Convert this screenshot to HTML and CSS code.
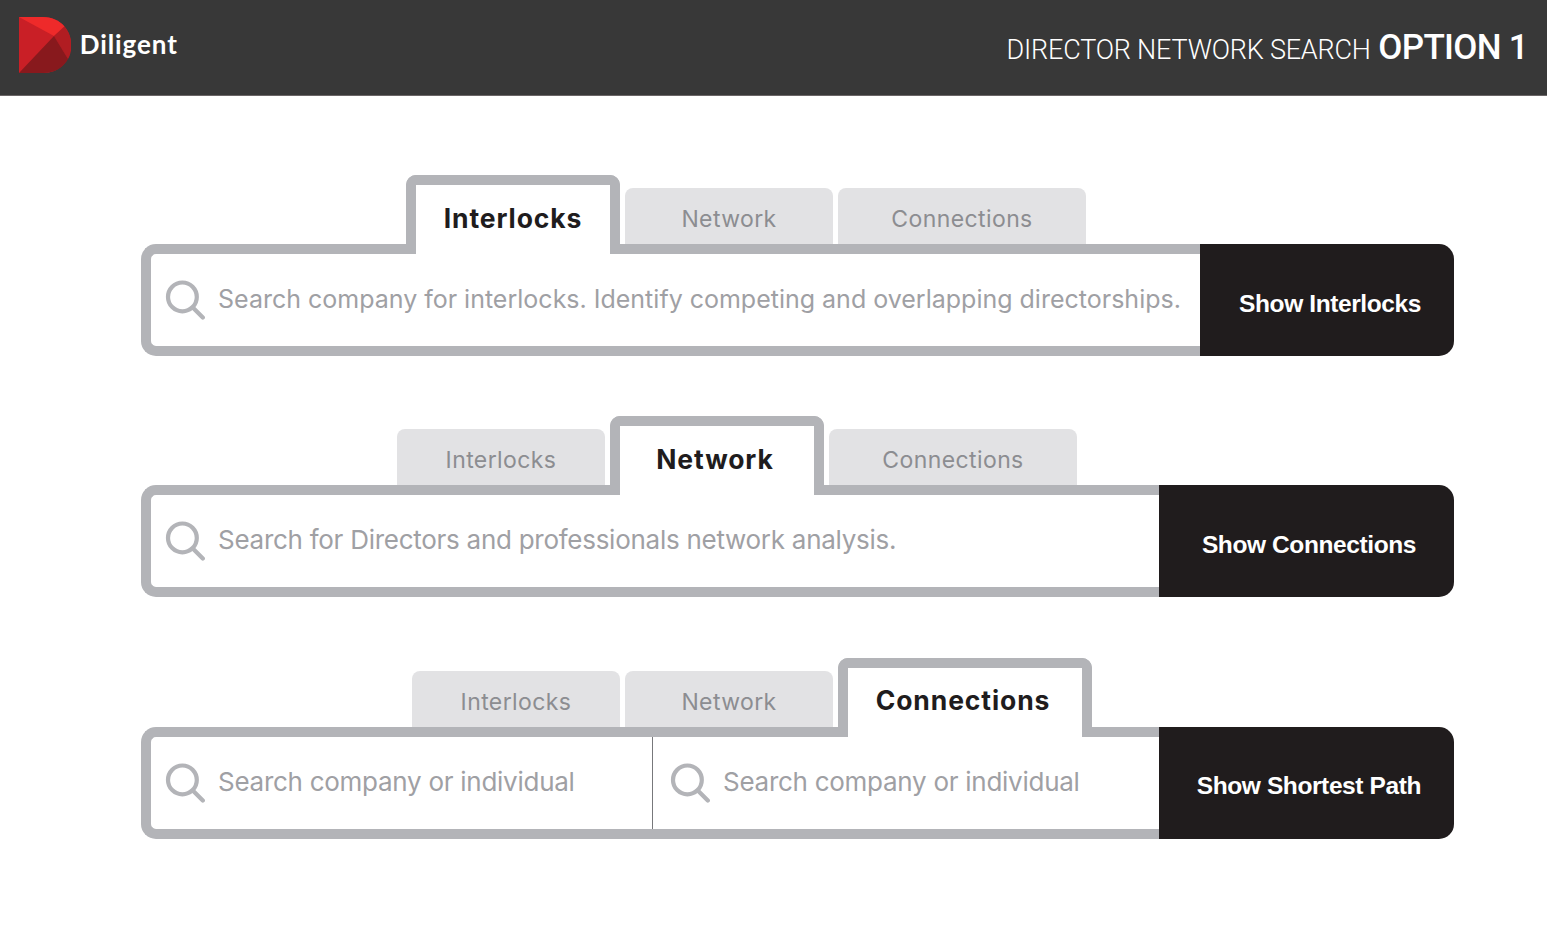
FILE: index.html
```html
<!DOCTYPE html>
<html>
<head>
<meta charset="utf-8">
<title>Diligent - Director Network Search</title>
<link rel="stylesheet" href="styles.css">
</head>
<body>

<svg width="0" height="0" class="defs">
	<symbol id="glass" viewBox="0 0 40 42">
		<circle cx="17.400" cy="17.900" r="14.400" fill="none" stroke="#b3b4b8" stroke-width="4.200"/>
		<path d="M27.800 28.500L37.800 38.600" fill="none" stroke="#b3b4b8" stroke-width="4.200" stroke-linecap="round"/>
	</symbol>
</svg>

<div class="header">
	<a href="#" class="logo">
		<svg width="52" height="56" viewBox="0 0 52 56">
			<path d="M0 0H24C40 0 52 12 52 28S40 56 24 56H0Z" fill="#c91f26"/>
			<path d="M0 0H24C33 0 41 4 45.500 9.500L35 19Z" fill="#ee2a2a"/>
			<path d="M45.500 9.500C54 19 54 33 49 42L35 19Z" fill="#b11d22"/>
			<path d="M0 56L35 19L49 42C44 51 35 56 24 56Z" fill="#88191d"/>
		</svg>
		<span class="brand">Diligent</span>
	</a>
	<h1><span class="light">DIRECTOR NETWORK SEARCH</span> <span class="option">OPTION 1</span></h1>
</div>

<div class="content">

	<div class="search interlocks">
		<ul class="tabs">
			<li class="active"><span>Interlocks</span></li>
			<li><span>Network</span></li>
			<li class="wide"><span>Connections</span></li>
		</ul>
		<div class="bar">
			<div class="field">
				<svg class="glass"><use href="#glass"/></svg>
				<span class="hint">Search company for interlocks. Identify competing and overlapping directorships.</span>
			</div>
			<div class="btn"><span>Show Interlocks</span></div>
		</div>
	</div>

	<div class="search network">
		<ul class="tabs">
			<li><span>Interlocks</span></li>
			<li class="active"><span>Network</span></li>
			<li class="wide"><span>Connections</span></li>
		</ul>
		<div class="bar">
			<div class="field">
				<svg class="glass"><use href="#glass"/></svg>
				<span class="hint">Search for Directors and professionals network analysis.</span>
			</div>
			<div class="btn"><span>Show Connections</span></div>
		</div>
	</div>

	<div class="search connections">
		<ul class="tabs">
			<li><span>Interlocks</span></li>
			<li><span>Network</span></li>
			<li class="active wide"><span>Connections</span></li>
		</ul>
		<div class="bar">
			<div class="field">
				<div class="half">
					<svg class="glass"><use href="#glass"/></svg>
					<span class="hint">Search company or individual</span>
				</div>
				<div class="half">
					<svg class="glass"><use href="#glass"/></svg>
					<span class="hint">Search company or individual</span>
				</div>
			</div>
			<div class="btn"><span>Show Shortest Path</span></div>
		</div>
	</div>

</div>

</body>
</html>
```
FILE: styles.css
```css
* {
	box-sizing: border-box;
}

body {
	margin: 0;
	background-color: #fff;
	font-family: Inter, "Liberation Sans", sans-serif;
	color: #201c1d;
}

.defs {
	position: absolute;
}

/* Header */

.header {
	display: flex;
	justify-content: space-between;
	height: 96px;
	padding: 16.500px 19px 0 19.300px;
	background-color: #383838;
	border-bottom: 1px solid #6a6566;
	color: #fff;
}

.logo {
	display: flex;
	color: #fff;
	text-decoration: none;
}

.brand {
	margin: 11px 0 0 8.500px;
	font-family: Lato, sans-serif;
	font-size: 26px;
	line-height: 32px;
	font-weight: bold;
	letter-spacing: 0.9px;
}

h1 {
	margin: 10.500px 0 0;
	font-family: Roboto, sans-serif;
	font-size: 27px;
	line-height: 42px;
	font-weight: 300;
	white-space: nowrap;
}

.light {
	letter-spacing: -0.2px;
}

.option {
	margin-left: 1px;
	font-size: 35px;
	font-weight: 500;
	letter-spacing: -0.7px;
}

/* Search blocks */

.content {
	width: 1313px;
	margin: 79px 0 0 141px;
}

.search {
	height: 241.400px;
}

.tabs {
	display: flex;
	align-items: flex-end;
	gap: 5px;
	height: 69px;
	margin: 0;
	padding: 0 0 0 265px;
	list-style: none;
}

.network .tabs {
	padding-left: 256px;
}

.connections .tabs {
	padding-left: 271px;
}

.tabs li {
	width: 208px;
	height: 56px;
	padding-top: 15px;
	border-radius: 8px 8px 0 0;
	background-color: #e2e2e4;
	color: #8c8d91;
	font-size: 23px;
	line-height: 32px;
	letter-spacing: 0.4px;
	text-align: center;
	white-space: nowrap;
}

.tabs .wide {
	width: 248px;
}

/* the open tab runs down over the bar border */
.tabs .active {
	position: relative;
	width: 214px;
	height: 79px;
	margin-bottom: -10px;
	padding-top: 17px;
	border: 10px solid #b3b4b8;
	border-bottom: 0;
	border-radius: 10px 10px 0 0;
	background-color: #fff;
	color: #201c1d;
	font-size: 26.500px;
	font-weight: bold;
	letter-spacing: 0.9px;
}

.tabs .active.wide {
	width: 254px;
}

.network .active,
.connections .active {
	padding-right: 4px;
}

.connections .active {
	padding-top: 16px;
}

.bar {
	display: flex;
	height: 112px;
}

.field {
	display: flex;
	flex: 1;
	min-width: 0;
	border: 10px solid #b3b4b8;
	border-right: 0;
	border-radius: 15px 0 0 15px;
}

.half {
	display: flex;
	width: 501px;
}

.half + .half {
	flex: 1;
	border-left: 1px solid #77787b;
}

.glass {
	flex: none;
	width: 40px;
	height: 42px;
	margin: 25px 0 0 14px;
}

.half + .half .glass {
	margin-left: 17px;
}

.hint {
	margin: 27px 0 0 13px;
	color: #9fa0a4;
	font-size: 26px;
	line-height: 36px;
	letter-spacing: -0.27px;
	white-space: nowrap;
}

.interlocks .hint {
	font-size: 25px;
	letter-spacing: 0.01px;
	word-spacing: -0.1px;
}

.btn {
	flex: none;
	width: 295px;
	padding: 43px 33px 0 0;
	border-radius: 0 15px 15px 0;
	background-color: #201c1d;
	color: #fff;
	font-family: "Liberation Sans", Arial, sans-serif;
	font-size: 24.500px;
	line-height: 34px;
	font-weight: bold;
	letter-spacing: -0.4px;
	text-align: right;
	white-space: nowrap;
}

.interlocks .btn {
	width: 254px;
}

.network .btn {
	padding-right: 38px;
}

.connections .btn {
	padding-top: 42px;
}
```
